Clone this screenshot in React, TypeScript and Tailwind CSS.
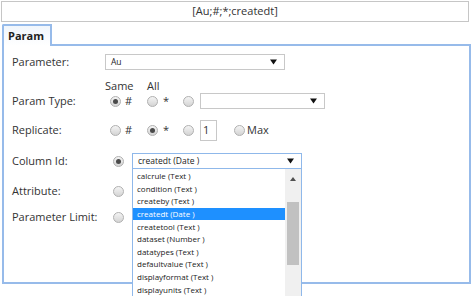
const COLUMNS = [
  { id: 'calcrule', label: 'calcrule (Text )' },
  { id: 'condition', label: 'condition (Text )' },
  { id: 'createby', label: 'createby (Text )' },
  { id: 'createdt', label: 'createdt (Date )' },
  { id: 'createtool', label: 'createtool (Text )' },
  { id: 'dataset', label: 'dataset (Number )' },
  { id: 'datatypes', label: 'datatypes (Text )' },
  { id: 'defaultvalue', label: 'defaultvalue (Text )' },
  { id: 'displayformat', label: 'displayformat (Text )' },
  { id: 'displayunits', label: 'displayunits (Text )' },
] as const;

function Arrow() {
  return (
    <svg width="7" height="6" viewBox="0 0 7 6" className="shrink-0">
      <path d="M0 0.5h7L3.5 5.5z" fill="#111" />
    </svg>
  );
}

function Radio({ checked = false }: { checked?: boolean }) {
  return (
    <span className="flex h-[11px] w-[11px] shrink-0 items-center justify-center rounded-full border border-[#b0b0b0] bg-gradient-to-b from-[#f4f4f4] to-[#d4d4d4]">
      {checked && <span className="h-[5px] w-[5px] rounded-full bg-[#4a4a4a]" />}
    </span>
  );
}

function Select({
  value,
  className,
}: {
  value: string;
  className: string;
}) {
  return (
    <div
      className={`flex h-[16px] items-center justify-between bg-white pl-[5px] pr-[7px] text-[8.5px] text-[#222] ${className}`}
    >
      <span>{value}</span>
      <Arrow />
    </div>
  );
}

export default function App() {
  return (
    <div className="relative h-[297px] w-[472px] overflow-hidden bg-white font-['Open_Sans',sans-serif] text-[11px] text-[#333]">
      <div className="ml-[1px] mt-[1px] flex h-[21px] w-[468px] items-center justify-center border border-[#c6c6c6] text-[#333]">
        [Au;#;*;createdt]
      </div>

      <div className="ml-[2px] mt-[2px] flex">
        <div className="relative z-10 -mb-[2px] flex h-[22px] w-[50px] items-center rounded-tl-[2px] border-2 border-b-0 border-[#97bbea] bg-gradient-to-b from-[#f1f6fc] to-white pl-[4px] font-bold text-[#222]">
          Param
        </div>
      </div>

      <div className="ml-[2px] h-[240px] w-[469px] border-2 border-[#97bbea] pl-[8px] pt-[8px]">
        <div className="flex h-[16px] items-center">
          <span className="w-[93px]">Parameter:</span>
          <Select value="Au" className="w-[180px] border border-[#c8c8c8]" />
        </div>

        <div className="mt-[10px] flex h-[12px] items-center pl-[93px]">
          <span className="w-[42px]">Same</span>
          <span>All</span>
        </div>

        <div className="mt-[1px] flex h-[16px] items-center">
          <span className="w-[98px]">Param Type:</span>
          <span className="flex w-[37px] items-center gap-[4px]">
            <Radio checked />#
          </span>
          <span className="flex w-[36px] items-center gap-[5px]">
            <Radio />*
          </span>
          <Radio />
          <Select value="" className="ml-[6px] w-[125px] border border-[#c8c8c8]" />
        </div>

        <div className="mt-[11px] flex h-[21px] items-center">
          <span className="w-[98px]">Replicate:</span>
          <span className="flex w-[37px] items-center gap-[4px]">
            <Radio />#
          </span>
          <span className="flex w-[36px] items-center gap-[5px]">
            <Radio checked />*
          </span>
          <Radio />
          <span className="ml-[6px] flex h-[21px] w-[17px] items-center border border-[#c8c8c8] pl-[2px]">
            1
          </span>
          <span className="ml-[17px] flex items-center gap-[2px]">
            <Radio />
            Max
          </span>
        </div>

        <div className="relative mt-[12px] flex h-[16px] items-center">
          <span className="w-[101px]">Column Id:</span>
          <Radio checked />
          <Select
            value="createdt (Date )"
            className="ml-[8px] w-[170px] border border-[#8fb8ea]"
          />
          <div className="absolute left-[120px] top-[16px] z-20 flex w-[170px] border-x border-[#8fb8ea] bg-white">
            <ul className="w-[154px] pt-[1px] text-[8px] text-[#222]">
              {COLUMNS.map((col) => (
                <li
                  key={col.id}
                  className={`flex h-[12.6px] items-center pl-[4px] ${
                    col.id === 'createdt' ? 'bg-[#1e90ff] text-white' : ''
                  }`}
                >
                  {col.label}
                </li>
              ))}
            </ul>
            <div className="flex w-[16px] flex-col items-center bg-[#f0f0f0]">
              <svg width="6" height="4" viewBox="0 0 6 4" className="mt-[8px]">
                <path d="M0 4h6L3 0z" fill="#505050" />
              </svg>
              <div className="mt-[21px] h-[63px] w-[12px] bg-[#c1c1c1]" />
            </div>
          </div>
        </div>

        <div className="mt-[14px] flex h-[16px] items-center">
          <span className="w-[101px]">Attribute:</span>
          <Radio />
        </div>

        <div className="mt-[10px] flex h-[16px] items-center">
          <span className="w-[101px]">Parameter Limit:</span>
          <Radio />
        </div>
      </div>
    </div>
  );
}
